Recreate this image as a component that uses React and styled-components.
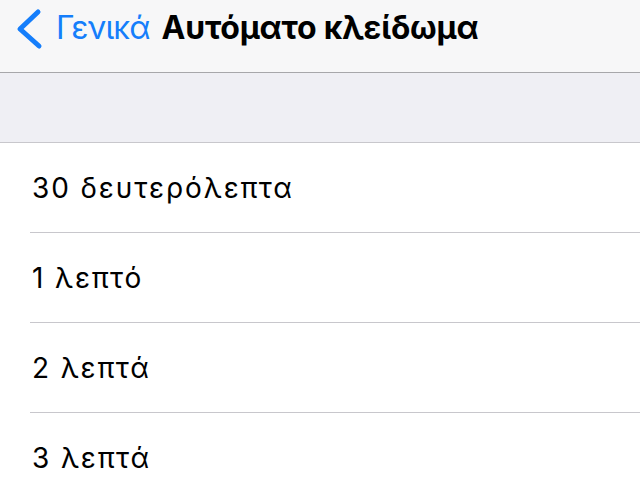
import React from 'react';
import styled, { createGlobalStyle } from 'styled-components';

const GlobalStyle = createGlobalStyle`
  html, body {
    margin: 0;
    padding: 0;
    background: #ffffff;
    font-family: Inter, 'Noto Sans', sans-serif;
    -webkit-font-smoothing: antialiased;
  }
`;

const Screen = styled.div`
  width: 640px;
  height: 500px;
  overflow: hidden;
  background: #ffffff;
`;

const NavBar = styled.header`
  position: relative;
  height: 73px;
  box-sizing: border-box;
  padding-bottom: 17px;
  display: flex;
  align-items: center;
  justify-content: center;
  background: #f7f7f8;
  border-bottom: 1px solid #a7a7aa;
`;

const BackButton = styled.div`
  position: absolute;
  left: 16px;
  top: 0;
  bottom: 17px;
  display: flex;
  align-items: center;
  gap: 12px;
  color: #157efb;
  font-size: 32px;
  letter-spacing: -0.9px;
`;

const Title = styled.h1`
  margin: 0;
  font-size: 32px;
  font-weight: 700;
  color: #000000;
  letter-spacing: -0.2px;
`;

const Spacer = styled.div`
  height: 69px;
  background: #efeff4;
  border-bottom: 1px solid #c8c7cc;
`;

const List = styled.ul`
  margin: 0;
  padding: 0 0 0 30px;
  list-style: none;
`;

const Row = styled.li`
  height: 89px;
  display: flex;
  align-items: center;
  padding-left: 2px;
  border-bottom: 1px solid #c8c7cc;
  font-size: 28px;
  color: #000000;
  letter-spacing: 1.9px;
`;

const Chevron = () => (
  <svg width="28" height="46" viewBox="0 0 28 46">
    <path d="M22 7 L4 24 L23 41" fill="none" stroke="#157efb" strokeWidth="5" strokeLinecap="round" strokeLinejoin="round" />
  </svg>
);

const options = ['30 δευτερόλεπτα', '1 λεπτό', '2 λεπτά', '3 λεπτά'];

export default function App() {
  return (
    <Screen>
      <GlobalStyle />
      <NavBar>
        <BackButton>
          <Chevron />
          Γενικά
        </BackButton>
        <Title>Αυτόματο κλείδωμα</Title>
      </NavBar>
      <Spacer />
      <List>
        {options.map((o) => (
          <Row key={o}>{o}</Row>
        ))}
      </List>
    </Screen>
  );
}
